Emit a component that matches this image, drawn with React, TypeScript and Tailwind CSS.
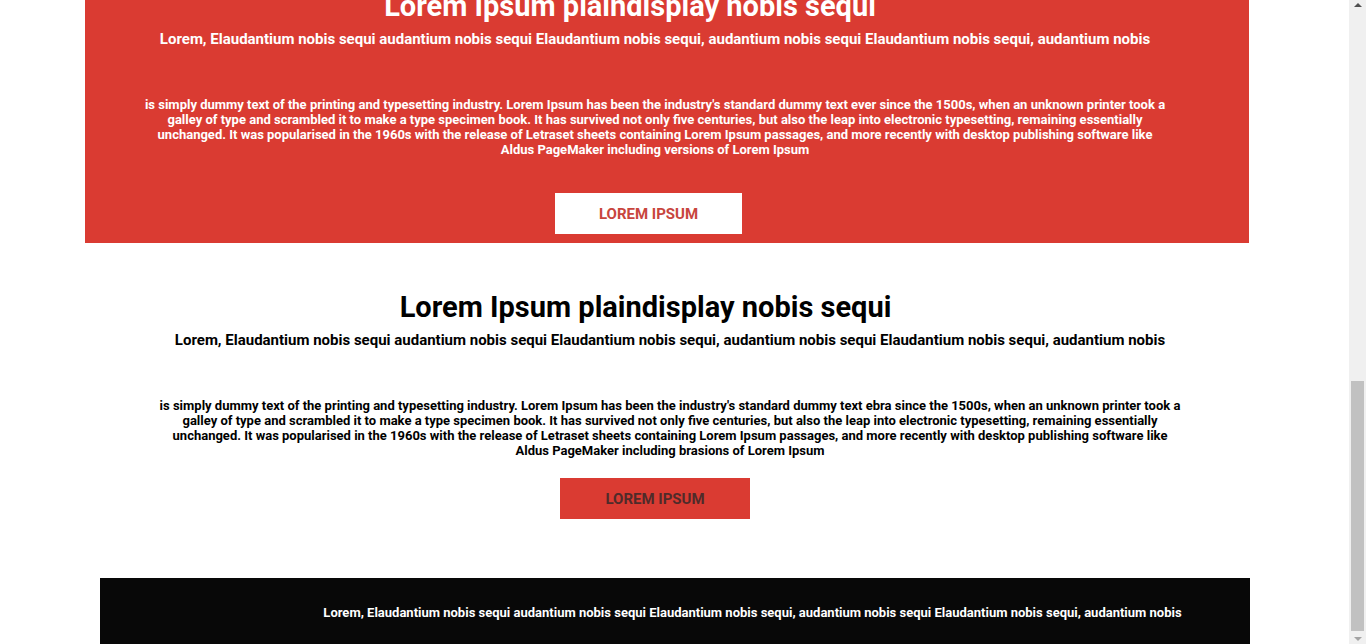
import React from "react";

const TITLE = "Lorem Ipsum plaindisplay nobis sequi";
const TAGLINE =
  "Lorem, Elaudantium nobis sequi audantium nobis sequi Elaudantium nobis sequi, audantium nobis sequi Elaudantium nobis sequi, audantium nobis";

function Lines({ lines }: { lines: string[] }) {
  return (
    <>
      {lines.map((line) => (
        <span key={line} className="block whitespace-nowrap">
          {line}
        </span>
      ))}
    </>
  );
}

function Scrollbar() {
  return (
    <aside aria-hidden="true" className="flex w-[17px] shrink-0 flex-col items-center justify-between bg-[#f0f0f0] py-[3px]">
      <svg width="8" height="4" viewBox="0 0 8 4" className="shrink-0">
        <path d="M4 0 8 4H0z" fill="#505050" />
      </svg>
      <div className="flex w-full grow flex-col justify-end pr-0.5 pb-1.5 pl-0.5">
        <div className="h-[40%] bg-[#c1c1c1]" />
      </div>
      <svg width="8" height="4" viewBox="0 0 8 4" className="shrink-0">
        <path d="M0 0h8L4 4z" fill="#a3a3a3" />
      </svg>
    </aside>
  );
}

export default function App() {
  return (
    <div className="flex h-screen overflow-hidden bg-white font-[Roboto,'Liberation_Sans',Arial,sans-serif] font-bold text-black">
      <main className="min-w-0 flex-1">
        <section className="-mt-3 mr-[100px] ml-[85px] bg-[#da3b32] pb-[9px] text-center text-white">
          <h2 className="pr-[74px] text-[29px] leading-9 whitespace-nowrap">{TITLE}</h2>
          <p className="mt-[5px] pr-6 text-[15px] leading-5 whitespace-nowrap">{TAGLINE}</p>
          <p className="mt-12 pr-6 text-[13px] leading-[15px]">
            <Lines
              lines={[
                "is simply dummy text of the printing and typesetting industry. Lorem Ipsum has been the industry's standard dummy text ever since the 1500s, when an unknown printer took a",
                "galley of type and scrambled it to make a type specimen book. It has survived not only five centuries, but also the leap into electronic typesetting, remaining essentially",
                "unchanged. It was popularised in the 1960s with the release of Letraset sheets containing Lorem Ipsum passages, and more recently with desktop publishing software like",
                "Aldus PageMaker including versions of Lorem Ipsum",
              ]}
            />
          </p>
          <div className="mt-9 flex justify-center pr-[37px]">
            <button type="button" className="h-[41px] w-[187px] bg-white pt-0.5 text-[15px] text-[#c8453d]">
              LOREM IPSUM
            </button>
          </div>
        </section>

        <section className="mr-[99px] ml-[100px] pt-[46px] pb-[59px] text-center">
          <h2 className="pr-[59px] text-[29px] leading-9 whitespace-nowrap">{TITLE}</h2>
          <p className="mt-[5px] pr-2.5 text-[15px] leading-5 whitespace-nowrap">{TAGLINE}</p>
          <p className="mt-12 pr-2.5 text-[13px] leading-[15px]">
            <Lines
              lines={[
                "is simply dummy text of the printing and typesetting industry. Lorem Ipsum has been the industry's standard dummy text ebra since the 1500s, when an unknown printer took a",
                "galley of type and scrambled it to make a type specimen book. It has survived not only five centuries, but also the leap into electronic typesetting, remaining essentially",
                "unchanged. It was popularised in the 1960s with the release of Letraset sheets containing Lorem Ipsum passages, and more recently with desktop publishing software like",
                "Aldus PageMaker including brasions of Lorem Ipsum",
              ]}
            />
          </p>
          <div className="mt-5 flex justify-center pr-10">
            <button type="button" className="h-[41px] w-[190px] bg-[#da3b32] pt-0.5 text-[15px] text-[#4f2b2a]">
              LOREM IPSUM
            </button>
          </div>
        </section>

        <footer className="mr-[99px] ml-[100px] bg-[#080808] pt-[25px] pb-6 pl-[155px] text-center text-white">
          <p className="text-[13px] leading-5 whitespace-nowrap">{TAGLINE}</p>
        </footer>
      </main>
      <Scrollbar />
    </div>
  );
}
